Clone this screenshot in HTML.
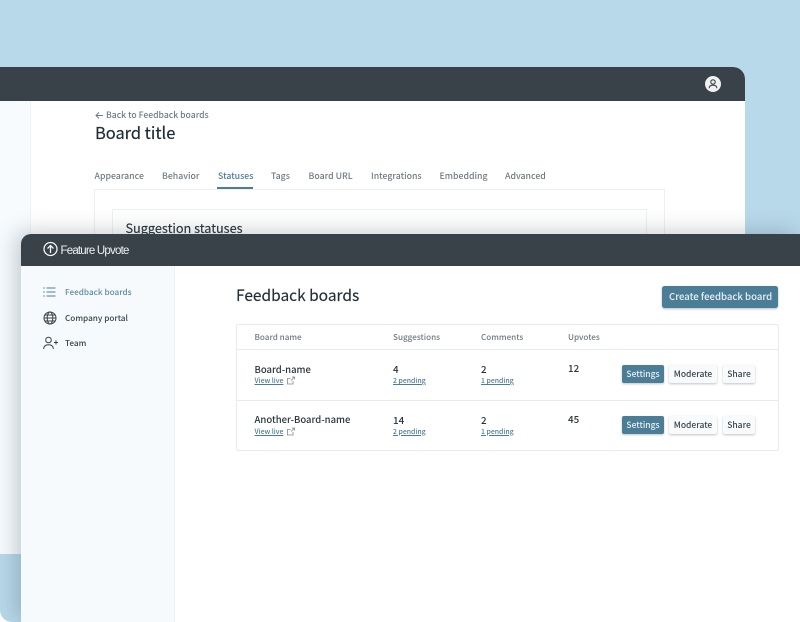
<!DOCTYPE html>
<html><head><meta charset="utf-8"><style>
html,body{margin:0;padding:0;width:800px;height:622px;overflow:hidden;background:#fff}
*{box-sizing:border-box}
#r{position:relative;width:800px;height:622px;overflow:hidden;background:#fff;font-family:"Noto Sans CJK JP","Liberation Sans",sans-serif;font-weight:500;filter:blur(.25px)}
.a{position:absolute}
.t{position:absolute;white-space:nowrap;line-height:1}
.btn{position:absolute;border-radius:2px;text-align:center;font-size:8.500px;line-height:18.600px;height:18px;box-shadow:0 1px 2px rgba(40,60,70,.3)}
.g{background:#4c7d96;color:#e8f1f5}
.w{background:#f8fafc;color:#37444b}
.link{color:#4c7d96;text-decoration:underline;font-size:6.900px}
.tab{font-size:8.750px;color:#6f7b83;top:172px}
.side{font-size:8.200px;color:#37444b}
.th{font-size:8.150px;color:#6f7b83;top:333.700px}
.num{font-size:9.800px;color:#27343c}
.h{font-weight:400}
</style></head><body><div id="r">
<div class="a" style="left:0;top:0;width:800px;height:622px;background:#b8d9ea;border-radius:0 0 0 12px"></div>
<div class="a" style="left:0;top:67px;width:745px;height:487px;background:#fff;border-radius:0 12px 0 0;overflow:hidden">
 <div class="a" style="left:0;top:33px;width:31px;height:454px;background:#f7fbfe;border-right:1px solid #eef2f5"></div>
 <div class="a" style="left:0;top:0;width:745px;height:33.500px;background:#384248"></div>
 <div class="a" style="left:705px;top:9px;width:16px;height:16px;border-radius:50%;background:#f0f1f2"></div>
 <svg class="a" style="left:705px;top:9px" width="16" height="16" viewBox="0 0 16 16" fill="none" stroke="#384248" stroke-width="1.100"><circle cx="8" cy="6" r="2.200"/><path d="M4.200 12.200c0-2.200 1.500-3 3.800-3s3.800.8 3.800 3"/></svg>
 <div class="a" style="left:94px;top:121.500px;width:571px;height:400px;border:1px solid #edf0f2"></div>
 <div class="a" style="left:112px;top:142px;width:535px;height:300px;border:1px solid #edf0f2"></div>
 <div class="a" style="left:217px;top:119.500px;width:36px;height:2px;background:#4c7d96"></div>
</div>
<svg class="a" style="left:95px;top:111px" width="9" height="9" viewBox="0 0 9 9" fill="none" stroke="#6f7b83" stroke-width="1"><path d="M8 4.500H1M4 1.500L1 4.500L4 7.500"/></svg>
<div class="t" style="left:106px;top:110.700px;font-size:8.650px;color:#6f7b83">Back to Feedback boards</div>
<div class="t h" style="left:95px;top:124px;font-size:16.400px;color:#1f2d36;-webkit-text-stroke:.2px #1f2d36">Board title</div>
<div class="t tab" style="left:94.500px">Appearance</div>
<div class="t tab" style="left:162px">Behavior</div>
<div class="t tab" style="left:218px;color:#4c7d96">Statuses</div>
<div class="t tab" style="left:271px">Tags</div>
<div class="t tab" style="left:308.500px">Board URL</div>
<div class="t tab" style="left:371px">Integrations</div>
<div class="t tab" style="left:439.500px">Embedding</div>
<div class="t tab" style="left:505px">Advanced</div>
<div class="t h" style="left:125.500px;top:221.750px;font-size:12.700px;color:#27343c;-webkit-text-stroke:.15px #27343c">Suggestion statuses</div>

<div class="a" style="left:21px;top:234px;width:779px;height:388px;background:#fff;border-radius:10px 0 0 0;box-shadow:-5px -2px 22px rgba(40,60,75,.26);overflow:hidden">
 <div class="a" style="left:0;top:0;width:779px;height:31.500px;background:#384248"></div>
 <div class="a" style="left:0;top:31.500px;width:154px;height:357px;background:#f6fafd;border-right:1px solid #eef2f5"></div>
</div>
<svg class="a" style="left:43px;top:241px" width="16" height="16" viewBox="0 0 16 16" fill="none" stroke="#f2f5f6" stroke-width="1.300"><circle cx="7.500" cy="8" r="6.500"/><path d="M7.500 12V4.500M4.500 7.500L7.500 4.500L10.500 7.500"/></svg>
<div class="t" style="left:60.500px;top:245.500px;font-size:11.500px;font-weight:400;letter-spacing:-.8px;color:#eef2f4;font-family:'Liberation Sans',sans-serif">Feature Upvote</div>

<svg class="a" style="left:43px;top:286px" width="13" height="12" viewBox="0 0 13 12" fill="none" stroke-width="1"><path d="M3.500 2H12.500M3.500 6H12.500M3.500 10H12.500" stroke="#4c7d96"/><path d="M.3 2H1.800M.3 6H1.800M.3 10H1.800" stroke="#4c7d96"/></svg>
<div class="t side" style="left:65px;top:288px;color:#5c8ca5">Feedback boards</div>
<svg class="a" style="left:43px;top:311px" width="14" height="14" viewBox="0 0 14 14" fill="none" stroke="#384248" stroke-width="1"><circle cx="7" cy="7" r="6"/><ellipse cx="7" cy="7" rx="2.800" ry="6"/><path d="M1 7H13M1.800 4H12.200M1.800 10H12.200"/></svg>
<div class="t side" style="left:65px;top:313.500px">Company portal</div>
<svg class="a" style="left:43px;top:336px" width="15" height="14" viewBox="0 0 15 14" fill="none" stroke="#384248" stroke-width="1"><circle cx="5.500" cy="4" r="2.800"/><path d="M.7 13c0-3 1.800-4.300 4.800-4.300S10.300 10 10.300 13M11 6.500H15M13 4.500V8.500"/></svg>
<div class="t side" style="left:65px;top:338.600px">Team</div>

<div class="t h" style="left:236px;top:288.400px;font-size:15.500px;color:#1f2d36;-webkit-text-stroke:.15px #1f2d36">Feedback boards</div>
<div class="a" style="left:662px;top:286px;width:116px;height:22px;background:#4c7d96;border-radius:2.500px;box-shadow:0 1px 2px rgba(40,60,70,.35)"></div>
<div class="t" style="left:669px;top:291.700px;font-size:9.600px;color:#e8f1f5">Create feedback board</div>

<div class="a" style="left:235.500px;top:324px;width:543px;height:127px;border:1px solid #e8ecef;border-radius:2px"></div>
<div class="a" style="left:236px;top:349px;width:542px;height:1px;background:#e8ecef"></div>
<div class="a" style="left:236px;top:400px;width:542px;height:1px;background:#e8ecef"></div>

<div class="t th" style="left:254.500px">Board name</div>
<div class="t th" style="left:393px">Suggestions</div>
<div class="t th" style="left:481px">Comments</div>
<div class="t th" style="left:568px">Upvotes</div>

<div class="t" style="left:254.500px;top:364.650px;font-size:9.500px;color:#27343c">Board-name</div>
<div class="t link" style="left:254.500px;top:377.200px">View live</div>
<svg class="a" style="left:287px;top:376px" width="8" height="9" viewBox="0 0 8 9" fill="none" stroke="#7b8a92" stroke-width=".8"><path d="M6 5V8H.5V2.500H3.500M4 4.500L7.500 1M5 1H7.500V3.500"/></svg>
<div class="t num" style="left:393px;top:365.400px">4</div>
<div class="t link" style="left:393px;top:377.200px">2 pending</div>
<div class="t num" style="left:481px;top:365.400px">2</div>
<div class="t link" style="left:481px;top:377.200px">1 pending</div>
<div class="t num" style="left:568px;top:364.400px">12</div>

<div class="t" style="left:254.500px;top:415.200px;font-size:9.500px;color:#27343c">Another-Board-name</div>
<div class="t link" style="left:254.500px;top:427.600px">View live</div>
<svg class="a" style="left:287px;top:427px" width="8" height="9" viewBox="0 0 8 9" fill="none" stroke="#7b8a92" stroke-width=".8"><path d="M6 5V8H.5V2.500H3.500M4 4.500L7.500 1M5 1H7.500V3.500"/></svg>
<div class="t num" style="left:393px;top:415.900px">14</div>
<div class="t link" style="left:393px;top:427.600px">2 pending</div>
<div class="t num" style="left:481px;top:415.900px">2</div>
<div class="t link" style="left:481px;top:427.600px">1 pending</div>
<div class="t num" style="left:568px;top:415.400px">45</div>

<div class="btn g" style="left:622px;top:365px;width:42px">Settings</div>
<div class="btn w" style="left:669px;top:365px;width:48px">Moderate</div>
<div class="btn w" style="left:723px;top:365px;width:32px">Share</div>
<div class="btn g" style="left:622px;top:416px;width:42px">Settings</div>
<div class="btn w" style="left:669px;top:416px;width:48px">Moderate</div>
<div class="btn w" style="left:723px;top:416px;width:32px">Share</div>
</div></body></html>
